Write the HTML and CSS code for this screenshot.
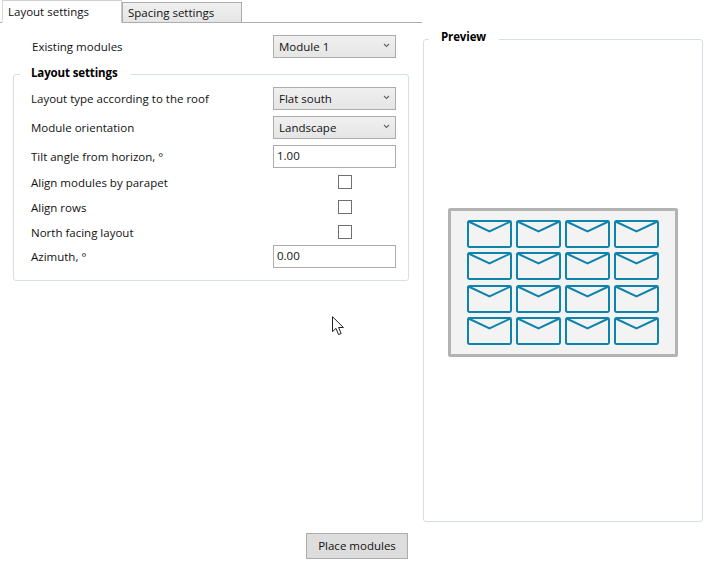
FILE: index.html
```html
<!DOCTYPE html>
<html lang="en">
<head>
<meta charset="utf-8">
<title>Layout settings</title>
<link rel="stylesheet" href="styles.css">
</head>
<body>
<svg class="defs" width="0" height="0" aria-hidden="true">
  <defs>
    <symbol id="env" viewBox="0 0 45 28">
      <rect x="1" y="1" width="43" height="26" rx="1.4" fill="none" stroke="#0f84ab" stroke-width="2"/>
      <path d="M1.5 1.5 L22.5 11.5 L43.5 1.5" fill="none" stroke="#0f84ab" stroke-width="2"/>
    </symbol>
    <symbol id="chev" viewBox="0 0 7 5">
      <path d="M1 1 L3.5 3.4 L6 1" fill="none" stroke="#666" stroke-width="1.1"/>
    </symbol>
  </defs>
</svg>
<div class="page">
  <div class="left">
    <div class="tabs">
      <div class="tab active">Layout settings</div>
      <div class="tab">Spacing settings</div>
    </div>
    <div class="row existing">
      <span class="label">Existing modules</span>
      <div class="combo"><span>Module 1</span><svg class="chev"><use href="#chev"/></svg></div>
    </div>
    <section class="group layout-group">
      <h2 class="legend">Layout settings</h2>
      <div class="row"><span class="label">Layout type according to the roof</span><div class="combo"><span>Flat south</span><svg class="chev"><use href="#chev"/></svg></div></div>
      <div class="row"><span class="label">Module orientation</span><div class="combo"><span>Landscape</span><svg class="chev"><use href="#chev"/></svg></div></div>
      <div class="row"><span class="label">Tilt angle from horizon, °</span><div class="input">1.00</div></div>
      <div class="checks">
        <div class="row check-row"><span class="label">Align modules by parapet</span><div class="check-cell"><span class="check"></span></div></div>
        <div class="row check-row"><span class="label">Align rows</span><div class="check-cell"><span class="check"></span></div></div>
        <div class="row check-row"><span class="label">North facing layout</span><div class="check-cell"><span class="check"></span></div></div>
      </div>
      <div class="row"><span class="label">Azimuth, °</span><div class="input">0.00</div></div>
    </section>
  </div>
  <section class="group preview">
    <h2 class="legend">Preview</h2>
    <div class="board">
      <div class="modules">
        <svg class="env"><use href="#env"/></svg><svg class="env"><use href="#env"/></svg><svg class="env"><use href="#env"/></svg><svg class="env"><use href="#env"/></svg>
        <svg class="env"><use href="#env"/></svg><svg class="env"><use href="#env"/></svg><svg class="env"><use href="#env"/></svg><svg class="env"><use href="#env"/></svg>
        <svg class="env"><use href="#env"/></svg><svg class="env"><use href="#env"/></svg><svg class="env"><use href="#env"/></svg><svg class="env"><use href="#env"/></svg>
        <svg class="env"><use href="#env"/></svg><svg class="env"><use href="#env"/></svg><svg class="env"><use href="#env"/></svg><svg class="env"><use href="#env"/></svg>
      </div>
    </div>
  </section>
  <div class="footer"><button class="place" type="button">Place modules</button></div>
</div>
<svg class="cursor" width="14" height="20" viewBox="0 0 14 20" aria-hidden="true">
  <path d="M.5 .7 V15.6 L4 12.4 L6.6 18.6 L9.2 17.5 L6.6 11.5 H11.4 Z" fill="#fff" stroke="#222" stroke-width="1"/>
</svg>
</body>
</html>
```
FILE: styles.css
```css
* { box-sizing: border-box; }
html, body { margin: 0; padding: 0; background: #fff; }
body {
  position: relative;
  width: 714px;
  height: 569px;
  overflow: hidden;
  font: 11.5px/16px "Open Sans", "Noto Sans", sans-serif;
  color: #111;
}
.defs { position: absolute; }
.page {
  display: grid;
  grid-template-columns: 423px 280px;
  grid-template-rows: 522px 47px;
}
.left { min-width: 0; }
.tabs {
  display: flex;
  align-items: flex-end;
  width: 422px;
  height: 23px;
  padding-left: 2px;
  border-bottom: 1px solid #acacac;
}
.tab {
  width: 120px;
  height: 21px;
  margin-bottom: -1px;
  padding: 2px 0 0 5px;
  background: linear-gradient(#f0f0f0, #e5e5e5);
  border: 1px solid #acacac;
}
.tab.active {
  height: 23px;
  padding-top: 3px;
  padding-left: 5px;
  background: #fff;
  border-bottom-color: #fff;
  border-right-color: #c8c8c8;
  border-left-color: #d8d8d8;
  border-top-color: #d0d0d0;
}
.row {
  display: flex;
  align-items: center;
  justify-content: space-between;
  width: 365px;
  min-height: 23px;
}
.existing {
  margin: 12px 0 16px 32px;
  width: 364px;
}
.group {
  position: relative;
  border: 1px solid #d5dfe5;
  border-radius: 3px;
}
.layout-group {
  display: flex;
  flex-direction: column;
  gap: 6px;
  width: 396px;
  margin-left: 13px;
  padding: 12px 0 12px 17px;
}
.legend {
  position: absolute;
  top: -10px;
  left: 6px;
  margin: 0;
  padding: 0 14px 0 11px;
  background: #fff;
  font-size: 11.5px;
  line-height: 16px;
  font-weight: 700;
  letter-spacing: -0.13px;
  color: #000;
}
.combo, .input {
  width: 123px;
  height: 23px;
  border: 1px solid #acacac;
  line-height: 20px;
  padding: 0 5px;
}
.combo {
  display: flex;
  align-items: center;
  justify-content: space-between;
  padding-right: 6px;
  background: linear-gradient(#f0f0f0, #e5e5e5);
}
.chev { width: 7px; height: 5px; margin: -3px -1px 0 0; }
.input { background: #fff; padding-left: 3px; }
.checks { display: flex; flex-direction: column; margin: -4px 0 -6px; }
.check-row { min-height: 25px; }
.check-cell { width: 123px; padding-left: 65px; margin-top: -1px; }
.check {
  display: block;
  width: 14px;
  height: 14px;
  border: 1px solid #707070;
  background: #fff;
}
.preview {
  margin-top: 39px;
  height: 483px;
  padding-top: 4px;
  display: flex;
  align-items: center;
  justify-content: center;
}
.preview .legend { left: 5px; padding: 0 13px 0 12px; top: -11px; }
.board {
  display: flex;
  align-items: center;
  justify-content: center;
  width: 230px;
  height: 149px;
  background: #f3f3f3;
  border: 3px solid #b3b3b3;
  border-radius: 2px;
}
.modules {
  display: grid;
  grid-template-columns: repeat(4, 45px);
  grid-auto-rows: 28px;
  column-gap: 4px;
  row-gap: 4.33px;
}
.env { width: 45px; height: 28px; display: block; }
.footer { grid-column: 1 / -1; padding: 11px 0 0 306px; }
.place {
  display: block;
  width: 102px;
  height: 26px;
  padding: 0;
  font: inherit;
  color: #111;
  background: #dddddd;
  border: 1px solid #acacac;
}
.cursor { position: absolute; left: 332px; top: 316px; }
```
